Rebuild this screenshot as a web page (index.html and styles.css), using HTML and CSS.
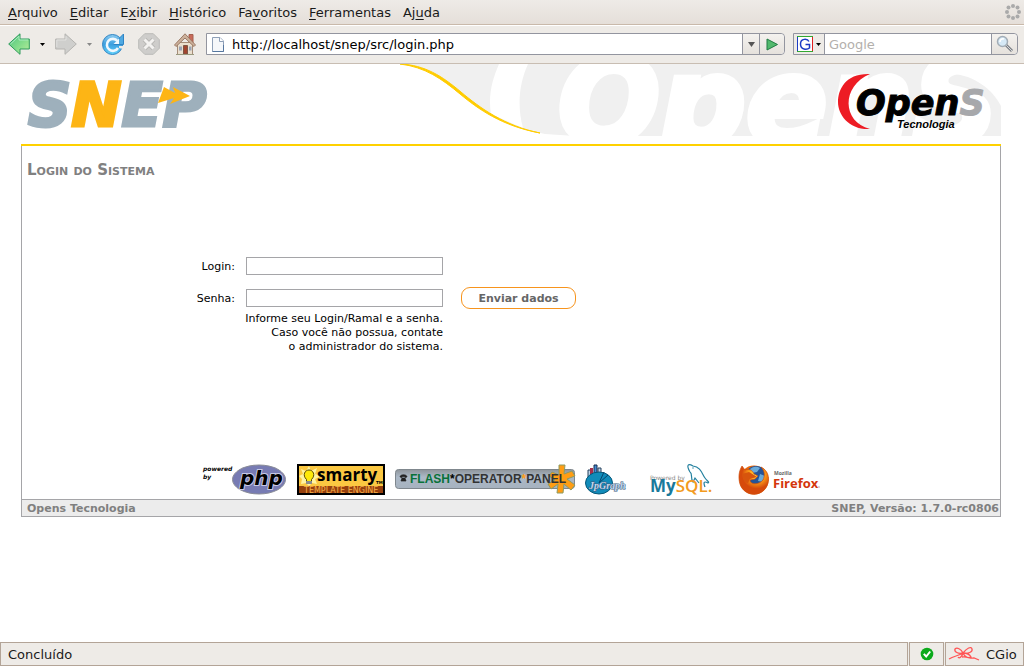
FILE: index.html
```html
<!DOCTYPE html>
<html lang="pt-BR">
<head>
<meta charset="utf-8">
<title>SNEP - Login do Sistema</title>
<link rel="stylesheet" href="styles.css">
</head>
<body>
<header class="chrome">
  <nav class="menubar" aria-label="Menu">
    <button class="menu" type="button"><u>A</u>rquivo</button>
    <button class="menu" type="button"><u>E</u>ditar</button>
    <button class="menu" type="button">E<u>x</u>ibir</button>
    <button class="menu" type="button"><u>H</u>istórico</button>
    <button class="menu" type="button">Fa<u>v</u>oritos</button>
    <button class="menu" type="button"><u>F</u>erramentas</button>
    <button class="menu" type="button">Aj<u>u</u>da</button>
    <svg class="throbber" width="18" height="18" viewBox="0 0 18 18" aria-hidden="true"><g fill="#aaa"><circle cx="9" cy="3" r="2"/><circle cx="13.500" cy="4.500" r="2"/><circle cx="15" cy="9" r="2"/><circle cx="13.500" cy="13.500" r="2"/><circle cx="9" cy="15" r="2"/><circle cx="4.500" cy="13.500" r="2"/><circle cx="3" cy="9" r="2"/><circle cx="4.500" cy="4.500" r="2"/></g></svg>
  </nav>
  <div class="toolbar">
    <button class="tool" type="button" aria-label="Voltar"><svg width="22" height="22" viewBox="0 0 22 22"><defs><linearGradient id="gback" x1="0" y1="0" x2="1" y2="1"><stop offset="0" stop-color="#4fc183"/><stop offset=".5" stop-color="#7fdb8a"/><stop offset="1" stop-color="#b9ee9a"/></linearGradient></defs><path d="M.7 11 12 .8V6h9.300v10H12v5.300z" fill="url(#gback)" stroke="#2e9a5c"/><path d="M2.500 11 11 3.200V7h9.200" fill="none" stroke="#a9ecc0"/></svg></button>
    <button class="caret" type="button" aria-label="Histórico de voltar"><svg width="5" height="3"><path d="M0 0h5L2.500 3z" fill="#000"/></svg></button>
    <button class="tool" type="button" aria-label="Avançar"><svg width="22" height="22" viewBox="0 0 22 22"><path d="M21.300 11 10 .8V6H.7v10H10v5.300z" fill="#cfcfcd" stroke="#b4b3b0"/><path d="M1.800 14V7H11V3.200" fill="none" stroke="#e2e2e0"/></svg></button>
    <button class="caret" type="button" aria-label="Histórico de avançar"><svg width="5" height="3"><path d="M0 0h5L2.500 3z" fill="#888"/></svg></button>
    <button class="tool" type="button" aria-label="Recarregar"><svg width="22" height="22" viewBox="0 0 22 22"><defs><linearGradient id="grel" x1="0" y1="0" x2="0" y2="1"><stop offset="0" stop-color="#8ccbf0"/><stop offset=".5" stop-color="#3c9fdf"/><stop offset="1" stop-color="#62d2fb"/></linearGradient></defs><circle cx="10.500" cy="11.500" r="10" fill="url(#grel)" stroke="#2f84c4"/><path d="M12 11.500h9.500V1l-3 3z" fill="#4fa9e2" stroke="#2f84c4"/><path d="M15.500 8a6 6 0 1 0 .5 7" fill="none" stroke="#eff8fe" stroke-width="2.600"/><path d="M11.500 11H17V5.500z" fill="#eff8fe"/><path d="M17 13h4.500v3L17 15z" fill="#eeebe7"/></svg></button>
    <button class="tool" type="button" aria-label="Parar"><svg width="22" height="22" viewBox="0 0 22 22"><path d="M6.700.7h8.600l6 6v8.600l-6 6H6.700l-6-6V6.700z" fill="#cecdcb" stroke="#bbbab8"/><path d="M6.500 6.500l9 9m0-9l-9 9" stroke="#b9b8b6" stroke-width="5"/><path d="M6.500 6.500l9 9m0-9l-9 9" stroke="#f3f2f0" stroke-width="3"/></svg></button>
    <button class="tool" type="button" aria-label="Página inicial"><svg width="22" height="22" viewBox="0 0 22 22"><path d="M15 1.500h4V10h-4z" fill="#c96a5a" stroke="#a4604f"/><path d="M3.500 9.500h15v12h-15z" fill="#eadfce" stroke="#a58c78"/><path d="M.5 12 11 .8 21.500 12 20 13.500 11 5l-9 8.500z" fill="#ccb19c" stroke="#9b7a65"/><path d="M9.500 12.500h4v8.500h-4z" fill="#a2442e" stroke="#7d5545"/><path d="M5 13.500h3v4H5zm10 0h2.500v4H15z" fill="#9aa4b5"/><path d="M2 21.500h18" stroke="#9a9a80"/></svg></button>
    <div class="address">
      <svg class="page-icon" width="12" height="15" viewBox="0 0 12 15" aria-hidden="true"><path d="M.5.500H8L11.500 4v10.500H.5z" fill="#f5f7fa" stroke="#8fa0b8"/><path d="M7.500.5V4.500h4" fill="#fff" stroke="#8fa0b8"/><path d="M.5 14.500h11V8" fill="none" stroke="#56779f"/></svg>
      <input class="url" type="text" aria-label="Endereço" value="http://localhost/snep/src/login.php">
      <button class="drop" type="button" aria-label="Endereços visitados"><svg width="7" height="5"><path d="M0 0h7L3.500 5z" fill="#555"/></svg></button>
      <button class="go" type="button" aria-label="Ir"><svg width="12" height="13" viewBox="0 0 12 13"><path d="M1 1l10.500 5.500L1 12z" fill="#52b96d" stroke="#217b43"/></svg></button>
    </div>
    <div class="search">
      <button class="engine" type="button" aria-label="Mecanismo de busca"><svg width="16" height="16" viewBox="0 0 16 16"><path d="M0 0h16v16H0z" fill="#fff"/><path d="M.5 16V.500" stroke="#1c3bc4"/><path d="M0 .5h16M0 15.500h16" stroke="#32a832"/><path d="M15.500 1v14" stroke="#e02020"/><path d="M12 5.500C10.500 2.500 3.500 2 3.500 8s6.500 6 9 4V8.500H8.500" fill="none" stroke="#1c3bc4" stroke-width="1.500"/></svg><svg width="5" height="3"><path d="M0 0h5L2.500 3z" fill="#000"/></svg></button>
      <input class="query" type="text" aria-label="Buscar" placeholder="Google">
      <button class="find" type="button" aria-label="Pesquisar"><svg width="18" height="18" viewBox="0 0 18 18"><path d="M10 10l6 6" stroke="#7d8187" stroke-width="3"/><path d="M10 10l6 6" stroke="#d5d8db"/><circle cx="6.500" cy="6.500" r="5" fill="#d6e9f6" stroke="#a3adb6" stroke-width="1.500"/><path d="M4 7a3 3 0 0 1 4-3" stroke="#fff" stroke-width="1.500" fill="none"/></svg></button>
    </div>
  </div>
</header>

<main class="page">
  <div class="banner">
    <svg class="snep" width="184" height="54" viewBox="0 0 184 54" role="img" aria-label="SNEP"><text class="snep-text" x="2" y="48"><tspan>S</tspan><tspan class="amber">N</tspan><tspan>EP</tspan></text><path d="M138 9l11 6-2-6 17 9-20 8 4-6-16 5z" fill="#fdb515"/></svg>
    <svg class="opens" width="601" height="72" viewBox="0 0 601 72" role="img" aria-label="OpenS Tecnologia">
      <path d="M0 0C25 1 42 12 61 28S105 62 145 70L175 72H601V0z" fill="#f0f0f0"/>
      <path d="M99 0C92 16 88 32 91 50L123 64C117 42 119 20 128 0z" fill="#fff"/>
      <path d="M545 0H601V42C590 20 565 8 545 10z" fill="#fff"/>
      <text class="ghost" x="158" y="79">OpenS</text>
      <path d="M0 0C25 1 42 12 61 28S105 62 140 69C102 62 78 45 60 30S25 3 0 0z" fill="#ffcc00" stroke="#ffcc00"/>
      <path d="M470 10C446 9 438 25 438 38S449 66 470 65C442 58 441 22 470 10z" fill="#ed1c24"/>
      <text class="opens-text" x="456" y="51">Open<tspan class="silver">S</tspan></text>
      <text class="tec" x="497" y="64">Tecnologia</text>
    </svg>
  </div>

  <section class="panel">
    <h1 class="title">Login do Sistema</h1>
    <form class="login">
      <label class="label" for="login">Login:</label>
      <input class="field" id="login" type="text">
      <label class="label second" for="senha">Senha:</label>
      <input class="field second" id="senha" type="password">
      <button class="send second" type="button">Enviar dados</button>
      <p class="hint">Informe seu Login/Ramal e a senha.<br>Caso você não possua, contate<br>o administrador do sistema.</p>
    </form>
    <div class="powered">
      <svg width="84" height="31" viewBox="0 0 84 31" role="img" aria-label="powered by php"><text class="by" x="0" y="7">powered</text><text class="by" x="0" y="15">by</text><ellipse cx="56" cy="15.500" rx="26.500" ry="14.500" fill="#777bb3" stroke="#8a8c96"/><text class="php" x="37" y="21">php</text></svg>
      <svg width="88" height="31" viewBox="0 0 88 31" role="img" aria-label="Smarty Template Engine"><path d="M1 1h86v29H1z" fill="#fbc842" stroke="#000" stroke-width="2"/><path d="M12 2l2 5 6-3-2 6 6 2-6 3 2 5-5-1-3 3-3-3-5 1 1-5-3-3 4-2-2-5 5 2z" fill="#fff3a0"/><path d="M2 22h84v7H2z" fill="#96400d"/><path d="M9.500 15.500C5 11 8 6 12 6s7 5 2.500 9.500v3h-5z" fill="#ffe90a" stroke="#594900"/><path d="M9 17h6v3H9z" fill="#8c8c8c"/><text class="smarty" x="20" y="17">smarty</text><text class="tm" x="79" y="20">TM</text><text class="engine-text" x="7" y="29">TEMPLATE ENGINE</text></svg>
      <svg width="180" height="31" viewBox="0 0 180 31" role="img" aria-label="Flash Operator Panel"><defs><linearGradient id="gpan" x1="0" y1="0" x2="0" y2="1"><stop offset="0" stop-color="#8e949a"/><stop offset=".4" stop-color="#acb9c7"/><stop offset="1" stop-color="#a6b2bf"/></linearGradient></defs><rect x=".5" y="5.500" width="179" height="19" rx="3" fill="url(#gpan)" stroke="#7f878d"/><path d="M5 13c0-3 7-3 7 0l-2 .5v-1H7v1zM7 14h3l1 3H6z" fill="#222" stroke="#222" stroke-width=".7"/><path d="M164 1h6l-1 9 8-3 3 5-8 3 8 6-4 5-7-6-1 9h-6l1-9-7 5-3-5 7-4-6-4 3-4 7 3z" fill="#ff9d14" stroke="#8c9a63"/><text class="flash" x="15" y="19"><tspan class="green">FLASH</tspan><tspan class="dark">*</tspan>OPERATOR<tspan class="orange">*</tspan>PANEL</text></svg>
      <svg width="55" height="31" viewBox="0 0 55 31" role="img" aria-label="JpGraph"><path d="M3 6h3v7H3zM13 4h3v6h-3z" fill="#bed3e6" stroke="#24415d"/><path d="M5 4h3v8H5z" fill="#a72f4b"/><path d="M9 1h3v10H9z" fill="#448ad2" stroke="#172a4d"/><ellipse cx="14" cy="19" rx="13.500" ry="11" fill="#118cba" stroke="#075779"/><path d="M14 19L19 8M14 19L23 11" stroke="#07456c"/><text class="jp" x="4" y="25">JpGraph</text></svg>
      <svg width="79" height="31" viewBox="0 0 79 31" role="img" aria-label="Powered by MySQL"><path d="M40 8C36 1 38-1 43 2 51 3 52 10 55 14c2 3 5 4 3 5-4-2-5-1-3 4M40 8c3 2 0 6 3 10l2-4 4 5" fill="none" stroke="#23809f" stroke-width="1.200"/><circle cx="43" cy="4" r=".7" fill="#23809f"/><text class="power" x="0" y="16">Powered by</text><text class="mysql" x="0" y="28">My<tspan class="gold">SQL.</tspan></text></svg>
      <svg width="82" height="31" viewBox="0 0 82 31" role="img" aria-label="Mozilla Firefox"><defs><radialGradient id="gfox" cx=".6" cy=".3"><stop offset="0" stop-color="#fff05a"/><stop offset=".5" stop-color="#ffa61a"/><stop offset="1" stop-color="#d64a0b"/></radialGradient></defs><circle cx="15" cy="16" r="14.500" fill="#e8680c"/><circle cx="17" cy="13" r="11" fill="#245498"/><path d="M11 5q5-4 10-1l-3 4-5 1zM21 10l5 2-2 6-5-1z" fill="#6babd9"/><path d="M3 2l3 4c4-2 8 1 9 4l4 2-3 3-5 1c0 5 9 5 13 0 2-4 2-9-2-13 10 5 9 17 3 23-8 8-21 4-24-6C-1 13 0 7 3 2z" fill="url(#gfox)" stroke="#cf4c0b" stroke-width=".7"/><path d="M3 10l7-2 5 3 3 2-7 2-2 4c-4 0-5-5-6-9z" fill="#d7540d"/><text class="moz" x="35" y="11">Mozilla</text><text class="fire" x="34" y="24">Firefox</text><circle cx="80" cy="23" r=".7" fill="#999"/></svg>
    </div>
  </section>
  <footer class="foot"><span>Opens Tecnologia</span><span>SNEP, Versão: 1.7.0-rc0806</span></footer>
</main>

<div class="status">
  <div class="cell grow">Concluído</div>
  <div class="cell check"><svg width="14" height="14" viewBox="0 0 14 14" role="img" aria-label="OK"><circle cx="7" cy="7" r="6.300" fill="#0caa1c"/><path d="M3.800 6.800l2.400 2.700 4-5" stroke="#fff" stroke-width="2" fill="none"/></svg></div>
  <div class="cell gio"><svg width="32" height="16" viewBox="0 0 32 16" aria-hidden="true"><path d="M1 13C6 10 10 10 15 7 19 2 23 0 24 3c1 3-4 5-9 4C13 3 9 1 7 3c-1 3 3 5 8 4-1 4-4 6-5 4M15 7c2 5 6 5 8 4-1-2-4-4-8-4M14 11c5-1 8 2 12 1l5 2" fill="none" stroke="#ff5555" stroke-width="1.300"/></svg><span>CGio</span></div>
</div>
</body>
</html>
```
FILE: styles.css
```css
* { box-sizing: border-box; }

body {
  margin: 0;
  min-height: 100vh;
  display: flex;
  flex-direction: column;
  background: #fff;
  color: #000;
  font-family: "DejaVu Sans", Verdana, sans-serif;
  font-size: 11px;
}

button, input { font: inherit; color: inherit; border-radius: 0; }
button { padding: 0; border: 0; background: none; }
svg { display: block; flex: none; }

.chrome { font-size: 13px; color: #1a1a1a; }

.menubar {
  display: flex;
  align-items: center;
  gap: 12px;
  height: 25px;
  padding: 0 2px 0 8px;
  background: linear-gradient(#eeebe7, #e5dfd9);
  border-bottom: 1px solid #c9b9aa;
}
.menu { line-height: 22px; padding-top: 1px; }
.menu u { text-underline-offset: 2px; }
.throbber { margin-left: auto; }

.toolbar {
  display: flex;
  align-items: center;
  height: 39px;
  padding: 0 6px 1px 8px;
  background: #eeebe7;
  border-top: 1px solid #fff;
  border-bottom: 1px solid #c8bdb2;
}
.tool { margin-right: 10px; }
.tool + .tool { margin-left: 4px; }
.caret { margin-right: 10px; }

.address, .search {
  display: flex;
  align-items: stretch;
  height: 22px;
  border: 1px solid #93959f;
  background: #fff;
}
.address { flex: 1; border-radius: 0 4px 4px 0; }
.page-icon { align-self: center; margin-left: 5px; }
.url, .query {
  flex: 1;
  min-width: 0;
  border: 0;
  padding: 0;
  background: none;
  color: #000;
  outline: 0;
}
.url { padding-left: 8px; }
.drop, .go, .find {
  display: flex;
  align-items: center;
  justify-content: center;
  border-left: 1px solid #93959f;
  background: linear-gradient(#f4f2ef, #e5e1dc);
}
.drop { width: 17px; }
.go { width: 25px; border-radius: 0 4px 4px 0; }
.search { width: 225px; margin-left: 8px; border-radius: 0 4px 4px 0; }
.engine {
  display: flex;
  align-items: center;
  gap: 3px;
  width: 31px;
  padding-left: 3px;
  border-right: 1px solid #93959f;
  background: #eeebe7;
}
.query { padding-left: 4px; }
.query::placeholder { color: #b3b0ac; opacity: 1; }
.find { width: 26px; border-radius: 0 4px 4px 0; }

.page { margin: 0 23px 0 21px; }

.banner {
  display: flex;
  justify-content: space-between;
  height: 82px;
  border-bottom: 2px solid #ffd100;
}
.snep { margin: 14px 0 0 5px; overflow: visible; }
.snep-text, .opens-text, .ghost {
  font-family: "DejaVu Sans", Verdana, sans-serif;
  font-weight: bold;
  font-style: italic;
}
.snep-text { font-size: 60px; fill: #9eb0bc; stroke: #9eb0bc; stroke-width: 3px; }
.amber { fill: #fdb515; stroke: #fdb515; }
.ghost { font-size: 120px; fill: #fff; stroke: #fff; stroke-width: 6px; }
.opens-text { font-size: 35px; fill: #000; stroke: #000; stroke-width: 1px; }
.silver { fill: #a7a8ab; stroke: #a7a8ab; }
.tec { font: italic bold 11px "Liberation Sans", Arial, sans-serif; fill: #000; }

.panel { border: 1px solid #a5a5a8; border-width: 0 1px; }
.title {
  margin: 0;
  padding: 15px 5px 0;
  font-size: 15px;
  line-height: 18px;
  font-variant: small-caps;
  color: #808080;
}
.login {
  display: grid;
  grid-template-columns: 213px 197px auto;
  column-gap: 11px;
  align-items: center;
  justify-content: start;
  padding-top: 78px;
}
.label { grid-column: 1; text-align: right; }
.field {
  grid-column: 2;
  width: 100%;
  height: 18px;
  padding: 0 3px;
  border: 1px solid #a5a5a8;
  background: #fff;
}
.second { margin-top: 12px; }
.send {
  grid-column: 3;
  height: 22px;
  min-width: 115px;
  margin-left: 7px;
  padding: 1px 15px 0;
  border: 1px solid #f7941d;
  border-radius: 9px;
  font-weight: bold;
  color: #666;
}
.hint {
  grid-column: 1 / 3;
  margin: 3px 0 0;
  line-height: 14px;
  text-align: right;
}
.powered {
  display: flex;
  gap: 10px;
  padding: 110px 0 4px 181px;
}
.powered svg { overflow: visible; }
.by { font: italic bold 6px "DejaVu Sans", sans-serif; }
.php { font: italic bold 20px "DejaVu Sans", sans-serif; stroke: #c9cae6; stroke-width: 2px; paint-order: stroke; }
.smarty { font: bold 17px "Open Sans", sans-serif; }
.tm { font: bold 4px "DejaVu Sans", sans-serif; }
.engine-text { font: 8px "DejaVu Sans", sans-serif; fill: #f7b04a; }
.flash { font: bold 12px "Liberation Sans", sans-serif; fill: #333; }
.green { fill: #087139; }
.dark { fill: #000; }
.orange { fill: #ff9d14; }
.jp { font: italic bold 10px "Liberation Serif", serif; fill: #c2d7eb; stroke: #3b5c80; stroke-width: 1px; paint-order: stroke; }
.power { font: 6px "DejaVu Sans", sans-serif; fill: #888; }
.mysql { font: bold 17px "Open Sans", sans-serif; fill: #19799b; }
.gold { fill: #f29a20; font-weight: 600; }
.moz { font: bold 5px "Open Sans", sans-serif; fill: #666; }
.fire { font: bold 13px "Open Sans", sans-serif; fill: #d4370c; }

.foot {
  display: flex;
  justify-content: space-between;
  padding: 1px 1px 0 5px;
  border: 1px solid #a5a5a8;
  background: #ececec;
  color: #808080;
  font-weight: bold;
  line-height: 15px;
}

.status {
  display: flex;
  gap: 1px;
  height: 24px;
  margin-top: auto;
  background: #eeebe7;
  font-size: 13px;
  color: #1a1a1a;
}
.cell {
  display: flex;
  align-items: center;
  border: 1px solid #b3a497;
}
.grow { flex: 1; padding-left: 7px; }
.check { width: 35px; justify-content: center; }
.gio { width: 79px; gap: 6px; padding-left: 2px; }
```
